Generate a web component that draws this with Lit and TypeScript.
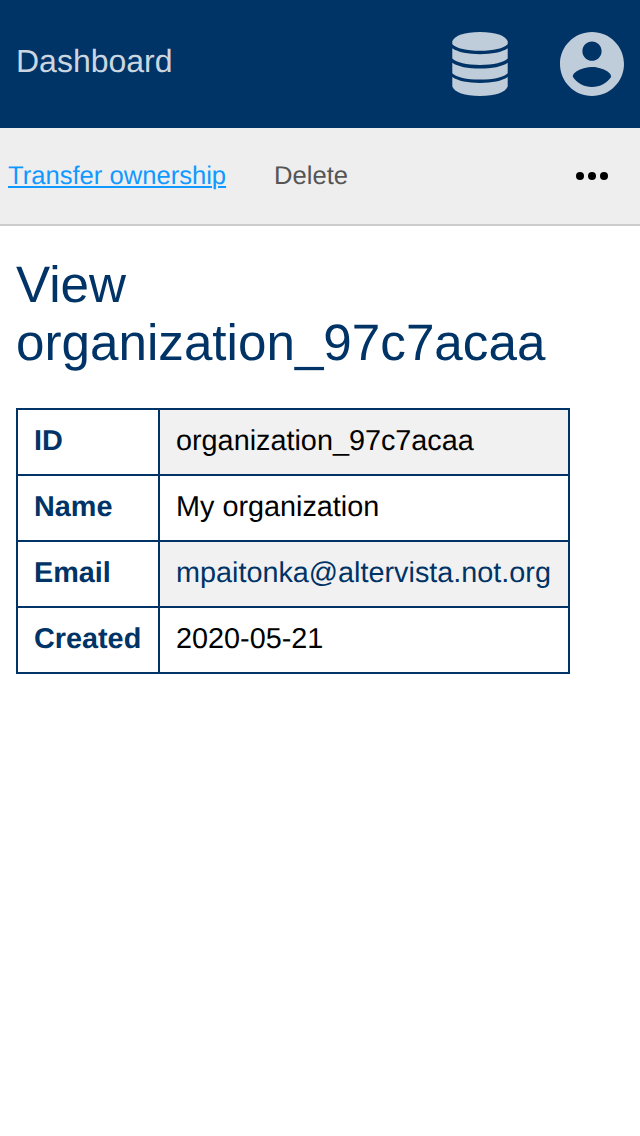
import { LitElement, html, css } from "lit";
import { customElement } from "lit/decorators.js";

@customElement("app-root")
export class AppRoot extends LitElement {
  static styles = css`
    :host {
      display: block;
      min-height: 1136px;
      background: #fff;
      color: #000;
      font-family: "Liberation Sans", Arial, sans-serif;
      font-size: 28.8px;
      text-rendering: geometricPrecision;
    }
    * { box-sizing: border-box; }
    .topbar {
      height: 128px;
      display: flex;
      align-items: center;
      padding: 0 16px;
      background: #003366;
      color: #ccd6e0;
    }
    .brand {
      flex: 1;
      font-size: 32px;
      line-height: 36px;
      padding-bottom: 6px;
    }
    .icons { display: flex; align-items: center; gap: 52px; }
    .icons svg { display: block; fill: #bfccd9; }
    .actions {
      height: 98px;
      display: flex;
      align-items: center;
      padding: 0 32px 0 8px;
      background: #eee;
      border-bottom: 2px solid #ccc;
      font-size: 25.6px;
      line-height: 30px;
    }
    .transfer {
      color: #1199ff;
      text-decoration: underline;
      text-decoration-thickness: 2px;
      text-underline-offset: 2px;
      margin-right: 48px;
    }
    .delete { color: #555; flex: 1; }
    .more { display: block; }
    main { padding: 30px 16px; }
    h1 {
      margin: 0 0 36px;
      font-size: 51.2px;
      line-height: 58px;
      font-weight: 400;
      color: #003366;
    }
    table { border-collapse: collapse; table-layout: fixed; width: 554px; }
    th, td {
      border: 2px solid #003366;
      padding: 0 16px 2px;
      height: 66px;
      text-align: left;
      white-space: nowrap;
    }
    th { width: 142px; color: #003366; font-weight: 700; }
    tr:nth-child(odd) td { background: #f1f1f1; }
    .mail { color: #003366; text-decoration: none; }
  `;

  render() {
    return html`
      <header class="topbar">
        <div class="brand">Dashboard</div>
        <div class="icons">
          <svg width="56" height="64" viewBox="0 0 56 64">
            <path d="M0.3 9.2C2.5 3.6 12.5 0 28 0S53.500 3.600 55.700 9.200V12.300C51.500 16.500 41.500 18.800 28 18.800S4.500 16.500 0.300 12.300z"/>
            <path d="M0.3 16.300C6 20.300 16 22.200 28 22.200S50 20.300 55.700 16.300V26.600C51.500 30.800 41.500 33 28 33S4.500 30.800 0.300 26.600z"/>
            <path d="M0.3 30.700C6 34.700 16 36.500 28 36.500S50 34.700 55.700 30.700V41.200C51.500 45.400 41.500 47.500 28 47.500S4.500 45.400 0.300 41.200z"/>
            <path d="M0.3 45.100C6 49.100 16 51 28 51S50 49.100 55.700 45.100V54.500C53.500 60.400 43.500 64 28 64S2.500 60.400 0.300 54.500z"/>
          </svg>
          <svg width="64" height="64" viewBox="2 2 20 20">
            <path d="M12 2C6.480 2 2 6.480 2 12s4.480 10 10 10 10-4.480 10-10S17.520 2 12 2zm0 3c1.660 0 3 1.340 3 3s-1.340 3-3 3-3-1.340-3-3 1.340-3 3-3zm0 14.200c-2.500 0-4.710-1.280-6-3.220.03-1.990 4-3.080 6-3.080 1.990 0 5.970 1.090 6 3.080-1.290 1.940-3.500 3.220-6 3.220z"/>
          </svg>
        </div>
      </header>
      <nav class="actions">
        <a class="transfer">Transfer ownership</a>
        <span class="delete">Delete</span>
        <svg class="more" width="32" height="8" viewBox="0 0 32 8">
          <circle cx="4" cy="4" r="4"/><circle cx="16" cy="4" r="4"/><circle cx="28" cy="4" r="4"/>
        </svg>
      </nav>
      <main>
        <h1>View<br />organization_97c7acaa</h1>
        <table>
          <tbody>
            <tr><th>ID</th><td>organization_97c7acaa</td></tr>
            <tr><th>Name</th><td>My organization</td></tr>
            <tr><th>Email</th><td><a class="mail">mpaitonka@altervista.not.org</a></td></tr>
            <tr><th>Created</th><td>2020-05-21</td></tr>
          </tbody>
        </table>
      </main>
    `;
  }
}
